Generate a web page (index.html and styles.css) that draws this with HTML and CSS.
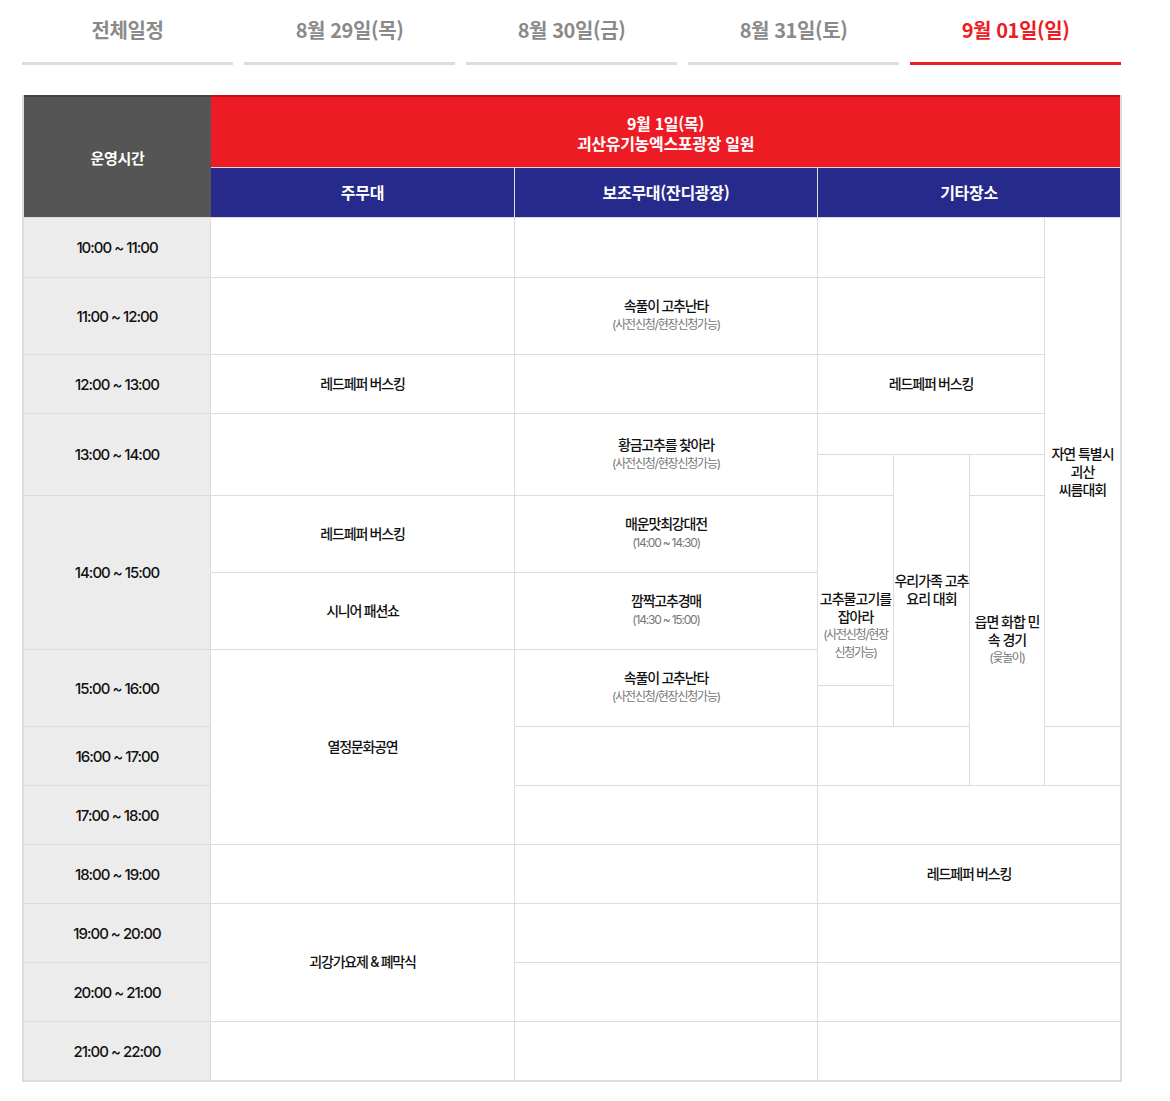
FILE: index.html
```html
<!DOCTYPE html>
<html lang="ko">
<head>
<meta charset="utf-8">
<title>일정표</title>
<link rel="stylesheet" href="styles.css">
</head>
<body>
<div class="page">
  <nav class="tabs">
    <a class="tab">전체일정</a>
    <a class="tab">8월 29일(목)</a>
    <a class="tab">8월 30일(금)</a>
    <a class="tab">8월 31일(토)</a>
    <a class="tab active">9월 01일(일)</a>
  </nav>

  <div class="schedule">
    <div class="h-time gr-1-3 gc1">운영시간</div>
    <div class="h-title gr1 gc-2-8"><span class="h-line">9월 1일(목)</span><span class="h-line">괴산유기농엑스포광장 일원</span></div>
    <div class="h-stage gr2 gc2">주무대</div>
    <div class="h-stage gr2 gc3">보조무대(잔디광장)</div>
    <div class="h-stage gr2 gc-4-8">기타장소</div>

    <!-- time column -->
    <div class="time gr3 gc1">10:00 ~ 11:00</div>
    <div class="time gr4 gc1">11:00 ~ 12:00</div>
    <div class="time gr5 gc1">12:00 ~ 13:00</div>
    <div class="time gr-6-8 gc1">13:00 ~ 14:00</div>
    <div class="time gr-8-10 gc1">14:00 ~ 15:00</div>
    <div class="time gr-10-12 gc1">15:00 ~ 16:00</div>
    <div class="time gr12 gc1">16:00 ~ 17:00</div>
    <div class="time gr13 gc1">17:00 ~ 18:00</div>
    <div class="time gr14 gc1">18:00 ~ 19:00</div>
    <div class="time gr15 gc1">19:00 ~ 20:00</div>
    <div class="time gr16 gc1">20:00 ~ 21:00</div>
    <div class="time gr17 gc1">21:00 ~ 22:00</div>

    <!-- main stage -->
    <div class="cell gr3 gc2"></div>
    <div class="cell gr4 gc2"></div>
    <div class="cell gr5 gc2"><span class="ev">레드페퍼 버스킹</span></div>
    <div class="cell gr-6-8 gc2"></div>
    <div class="cell gr8 gc2"><span class="ev">레드페퍼 버스킹</span></div>
    <div class="cell gr9 gc2"><span class="ev">시니어 패션쇼</span></div>
    <div class="cell gr-10-14 gc2"><span class="ev">열정문화공연</span></div>
    <div class="cell gr14 gc2"></div>
    <div class="cell gr-15-17 gc2"><span class="ev">괴강가요제 &amp; 폐막식</span></div>
    <div class="cell gr17 gc2"></div>

    <!-- sub stage -->
    <div class="cell gr3 gc3"></div>
    <div class="cell gr4 gc3"><span class="ev">속풀이 고추난타</span><span class="note">(사전신청/현장신청가능)</span></div>
    <div class="cell gr5 gc3"></div>
    <div class="cell gr-6-8 gc3"><span class="ev">황금고추를 찾아라</span><span class="note">(사전신청/현장신청가능)</span></div>
    <div class="cell gr8 gc3"><span class="ev">매운맛최강대전</span><span class="note">(14:00 ~ 14:30)</span></div>
    <div class="cell gr9 gc3"><span class="ev">깜짝고추경매</span><span class="note">(14:30 ~ 15:00)</span></div>
    <div class="cell gr-10-12 gc3"><span class="ev">속풀이 고추난타</span><span class="note">(사전신청/현장신청가능)</span></div>
    <div class="cell gr12 gc3"></div>
    <div class="cell gr13 gc3"></div>
    <div class="cell gr14 gc3"></div>
    <div class="cell gr15 gc3"></div>
    <div class="cell gr16 gc3"></div>
    <div class="cell gr17 gc3"></div>

    <!-- other places -->
    <div class="cell gr3 gc-4-7"></div>
    <div class="cell gr-3-12 gc7"><span class="ev narrow">자연 특별시<br>괴산<br>씨름대회</span></div>
    <div class="cell gr4 gc-4-7"></div>
    <div class="cell gr5 gc-4-7"><span class="ev">레드페퍼 버스킹</span></div>
    <div class="cell gr6 gc-4-7"></div>
    <div class="cell gr7 gc4"></div>
    <div class="cell gr-7-12 gc5"><span class="ev narrow">우리가족 고추<br>요리 대회</span></div>
    <div class="cell gr7 gc6"></div>
    <div class="cell gr-8-11 gc4 shift"><span class="ev narrow">고추물고기를<br>잡아라</span><span class="note narrow-note">(사전신청/현장<br>신청가능)</span></div>
    <div class="cell gr-8-13 gc6"><span class="ev narrow">읍면 화합 민<br>속 경기</span><span class="note narrow-note">(윷놀이)</span></div>
    <div class="cell gr11 gc4"></div>
    <div class="cell gr12 gc-4-6"></div>
    <div class="cell gr12 gc7"></div>
    <div class="cell gr13 gc-4-8"></div>
    <div class="cell gr14 gc-4-8"><span class="ev">레드페퍼 버스킹</span></div>
    <div class="cell gr15 gc-4-8"></div>
    <div class="cell gr16 gc-4-8"></div>
    <div class="cell gr17 gc-4-8"></div>
  </div>
</div>
</body>
</html>
```

FILE: styles.css
```css
* { box-sizing: border-box; }
html, body { margin: 0; padding: 0; background: #fff; }
body {
  font-family: "Noto Sans CJK KR", "Noto Sans", "Liberation Sans", sans-serif;
  color: #111;
}
.page { padding: 0 0 0 22px; width: 1170px; }

.tabs { display: flex; gap: 11px; width: 1099px; }
.tab {
  flex: 0 0 211px;
  height: 65px;
  padding-bottom: 2px;
  border-bottom: 3px solid #dcdcdc;
  text-align: center;
  line-height: 60px;
  font-size: 20px;
  font-weight: 700;
  letter-spacing: -0.4px;
  color: #8a8a8a;
}
.tab.active { color: #ed1c24; border-bottom-color: #ed1c24; }

.schedule {
  margin-top: 30px;
  width: 1100px;
  display: grid;
  grid-template-columns: 186px 303px 302px 75px 75px 74px 75px;
  grid-template-rows: 72px 49px 59px 76px 58px 40px 40px 76px 76px 35px 40px 58px 58px 58px 58px 58px 58px;
  gap: 1px;
  background: #dcdcdc;
  border: 2px solid #dcdcdc;
  border-top: 0;
}

.h-time, .h-title, .h-stage {
  display: flex; align-items: center; justify-content: center;
  text-align: center; color: #fff; font-weight: 700;
  font-size: 16px; letter-spacing: -0.3px; line-height: 19px;
}
.h-time { background: #555; border-top: 2px solid #444; font-size: 15px; }
.h-title { flex-direction: column; background: #ed1c24; border-top: 2px solid #c40f18; padding-top: 1px; }
.h-line { display: block; line-height: 20px; }
.h-stage { background: #262a8b; }
.h-time.gc1 { margin-right: -1px; }

.time {
  background: #ececec;
  display: flex; align-items: center; justify-content: center;
  font-family: "Inter", "Noto Sans CJK KR", sans-serif;
  font-size: 15px; font-weight: 500; letter-spacing: -1px; color: #111;
}
.cell {
  background: #fff;
  display: flex; flex-direction: column; align-items: center; justify-content: center;
  text-align: center;
  padding-bottom: 1px;
}
.ev { font-family: "Inter", "Noto Sans CJK KR", sans-serif; font-size: 14px; font-weight: 500; letter-spacing: -1.2px; line-height: 18px; color: #111; }
.note { font-family: "Inter", "Noto Sans CJK KR", sans-serif; font-size: 12px; letter-spacing: -1.2px; line-height: 19px; color: #777; }
.narrow { letter-spacing: -1px; line-height: 18px; }
.narrow-note { line-height: 18px; letter-spacing: -1.3px; }
.shift { padding-top: 72px; }

/* grid placement */
.gc1 { grid-column: 1; }
.gc2 { grid-column: 2; }
.gc3 { grid-column: 3; }
.gc4 { grid-column: 4; }
.gc5 { grid-column: 5; }
.gc6 { grid-column: 6; }
.gc7 { grid-column: 7; }
.gc-2-8 { grid-column: 2 / 8; }
.gc-4-8 { grid-column: 4 / 8; }
.gc-4-7 { grid-column: 4 / 7; }
.gc-4-6 { grid-column: 4 / 6; }

.gr1 { grid-row: 1; }
.gr2 { grid-row: 2; }
.gr3 { grid-row: 3; }
.gr4 { grid-row: 4; }
.gr5 { grid-row: 5; }
.gr6 { grid-row: 6; }
.gr7 { grid-row: 7; }
.gr8 { grid-row: 8; }
.gr9 { grid-row: 9; }
.gr11 { grid-row: 11; }
.gr12 { grid-row: 12; }
.gr13 { grid-row: 13; }
.gr14 { grid-row: 14; }
.gr15 { grid-row: 15; }
.gr16 { grid-row: 16; }
.gr17 { grid-row: 17; }
.gr-1-3 { grid-row: 1 / 3; }
.gr-3-12 { grid-row: 3 / 12; }
.gr-6-8 { grid-row: 6 / 8; }
.gr-7-12 { grid-row: 7 / 12; }
.gr-8-10 { grid-row: 8 / 10; }
.gr-8-11 { grid-row: 8 / 11; }
.gr-8-13 { grid-row: 8 / 13; }
.gr-10-12 { grid-row: 10 / 12; }
.gr-10-14 { grid-row: 10 / 14; }
.gr-15-17 { grid-row: 15 / 17; }
```
